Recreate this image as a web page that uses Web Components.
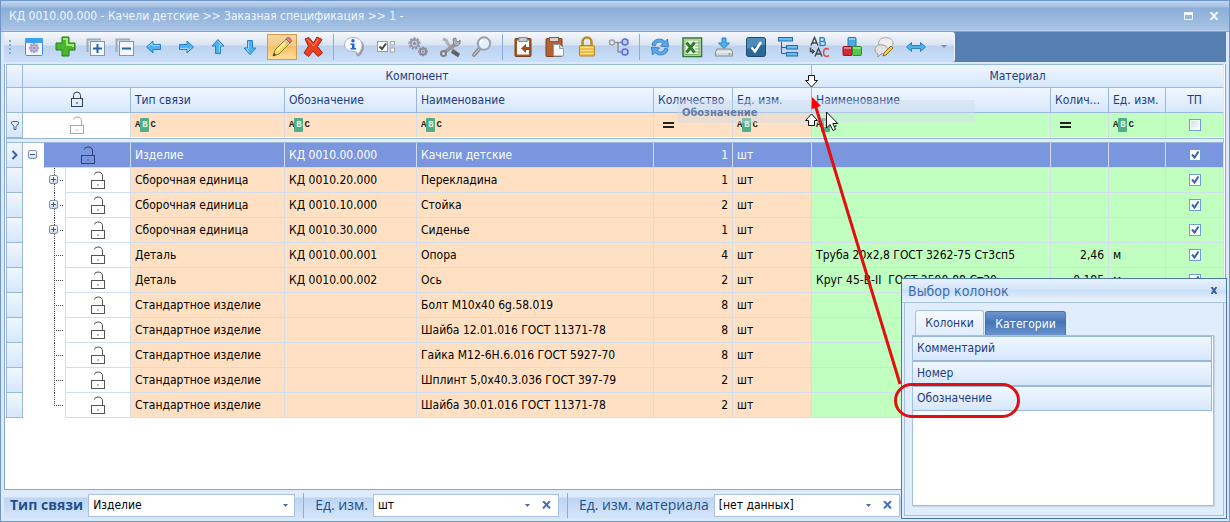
<!DOCTYPE html>
<html lang="ru">
<head>
<meta charset="utf-8">
<title>Заказная спецификация</title>
<style>
  html, body { margin: 0; height: 100%; }
  body {
    font: 12px/16px "DejaVu Sans Condensed", "Noto Sans", sans-serif;
    color: #000;
    background: #d9e8fa;
    overflow: hidden;
  }
</style>
</head>
<body>
<app-window caption="КД 0010.00.000 - Качели детские &gt;&gt; Заказная спецификация &gt;&gt; 1 -">
  <tool-bar slot="toolbar"></tool-bar>
  <spec-grid></spec-grid>
  <status-bar slot="status">
    <status-field label="Тип связи" value="Изделие" main></status-field>
    <status-field label="Ед. изм." value="шт" clearable></status-field>
    <status-field label="Ед. изм. материала" value="[нет данных]" clearable></status-field>
  </status-bar>
  <column-chooser slot="overlay" caption="Выбор колонок"></column-chooser>
  <drag-ghost slot="overlay">Обозначение</drag-ghost>
  <drag-marks slot="overlay"></drag-marks>
</app-window>

<script>
const define = (name, css, html) => {
  customElements.define(name, class extends HTMLElement {
    connectedCallback() {
      if (this.shadowRoot) return;
      const root = this.attachShadow({ mode: 'open' });
      const body = typeof html === 'function' ? html(this) : html;
      root.innerHTML = `<style>:host,*{box-sizing:border-box}${css}</style>${body}`;
    }
  });
};

const gear = (cx, cy, r, fill, teeth = 8) => {
  let s = '';
  for (let i = 0; i < teeth; i++) {
    s += `<rect x="${cx - 1.3}" y="${cy - r - 1.5}" width="2.6" height="3.4" fill="${fill}" transform="rotate(${i * 360 / teeth} ${cx} ${cy})"/>`;
  }
  return `${s}<circle cx="${cx}" cy="${cy}" r="${r}" fill="${fill}"/><circle cx="${cx}" cy="${cy}" r="${r * .62}" fill="#c9c9dc"/><circle cx="${cx}" cy="${cy}" r="${r * .35}" fill="#8c8ca6"/>`;
};
const arrowPath = 'M4.500 12l6.500-6v3.500h7.500v5H11V18z';
const arrow = deg => `<g transform="rotate(${deg} 12 12)"><path d="${arrowPath}" fill="#4fb2ef" stroke="#2a80c8" stroke-linejoin="round"/><path d="M6.500 11.500L10 8.200v2.300h7.500" fill="none" stroke="#9bdafa"/></g>`;

const ICONS = {
  view: `<rect x="3.500" y="3.500" width="17" height="17" rx="1" fill="#f4f7fd" stroke="#3f8fe0"/><rect x="3" y="3" width="18" height="5" rx="1" fill="#3da0f0"/>${gear(12, 13, 3.6, '#a8a0cc')}`,
  add: `<path d="M8 3h7v6h6v7h-6v6H8v-6H2V9h6z" transform="translate(1 -1)" fill="#48b82a" stroke="#267a18"/><path d="M10 4h4v6h6v2" fill="none" stroke="#a5ea78" stroke-width="2"/>`,
  expand: `<path d="M3.500 17V4.500H17" fill="none" stroke="#a0acba" stroke-width="2"/><rect x="6.500" y="6.500" width="14" height="14" fill="#f2f8fd" stroke="#8297ac"/><path d="M13.500 9v9M9 13.500h9" stroke="#2a64a0" stroke-width="2"/>`,
  collapse: `<g transform="translate(-3 0)"><path d="M4.500 17V4.500H18" fill="none" stroke="#a0acba" stroke-width="2"/><rect x="7.500" y="6.500" width="14" height="14" fill="#f2f8fd" stroke="#8297ac"/><path d="M10 13.500h9" stroke="#2a64a0" stroke-width="2"/></g>`,
  left: `<g transform="translate(-4 0)">${arrow(0)}</g>`,
  right: `<g transform="translate(-3 0)">${arrow(180)}</g>`,
  up: `<g transform="translate(-2 0)">${arrow(90)}</g>`,
  down: `<g transform="translate(-1 0)">${arrow(270)}</g>`,
  edit: `<path d="M3 21l2-6L16 4l4 4L9 19z" fill="#f8dc50" stroke="#907830"/><path d="M6.500 16L17 5.500" stroke="#fff4a0" stroke-width="2"/><path d="M16 4l1.500-1.500q3-.5 4 3.500L20 8z" fill="#e88080" stroke="#a85858"/><path d="M14.500 5.500l4 4" stroke="#b8c0c8" stroke-width="2"/><path d="M3 21l1-3 2 2z" fill="#333"/>`,
  remove: `<path d="M4 4l4-1.500 4.500 5.500L16 2l5 2.500-4.500 7L21.500 18 17 21.500l-5-5.500-4.500 5.500-4.500-3.500L7.500 11z" fill="#ee4020" stroke="#a82010" stroke-linejoin="round"/><path d="M6.500 4.500l6 6.500 4.500-6.500" fill="none" stroke="#ff9070"/>`,
  info: `<path d="M12 4c6 0 10 3 10 7.500 0 4-2 6-4 9l-3 1-1-3z" fill="#9b98a4"/><path d="M11 2.500c5.500 0 9 3 9 7.500s-2 6-4 9.500l-2-3C7 17 2.500 14.500 2.500 10S6 2.500 11 2.500z" fill="#f8f8fe" stroke="#b4b2c4"/><circle cx="11" cy="5.800" r="1.700" fill="#1d66d8"/><path d="M8.500 8.500h4V13h1.500v1.500H8.500V13H10v-3H8.500z" fill="#1d66d8"/>`,
  options: `<g transform="translate(2 0)"><rect x="1.500" y="6.500" width="10" height="10" fill="#fff" stroke="#9a9a9a"/><path d="M3.500 11.500l2.500 2.500L10 8.500" fill="none" stroke="#444" stroke-width="2"/><rect x="14.500" y="6.500" width="4" height="3.500" fill="#f5f5f5" stroke="#a8a8a8"/><rect x="14.500" y="13" width="4" height="4" fill="#f5f5f5" stroke="#a8a8a8"/></g>`,
  gears: gear(8.5, 8.500, 4.6, '#9a9aab', 9) + gear(17, 16.500, 3.2, '#8a8a9c'),
  tools: `<path d="M5 4l3 1 2 4 8 9" stroke="#b0b0b6" stroke-width="3" fill="none"/><path d="M19 8L7 17" stroke="#98989e" stroke-width="4"/><path d="M15 4l3-1v3l3 1 1-2c1 5-3 7-6 5z" fill="#b4b4ba" stroke="#808088"/><circle cx="5.500" cy="18.500" r="2.500" fill="none" stroke="#808088" stroke-width="2"/><path d="M14 16l7 4.500" stroke="#606068" stroke-width="4"/>`,
  search: `<path d="M9.500 13.500L4 20" stroke="#8e8e94" stroke-width="4" stroke-linecap="round"/><path d="M9.500 13.500L4 20" stroke="#d8d8dc" stroke-linecap="round"/><circle cx="14" cy="8.500" r="6.200" fill="#e4effb" stroke="#9aa0aa" stroke-width="2"/><path d="M10.500 8a3.500 3.500 0 013-3" fill="none" stroke="#fff" stroke-width="1.500"/>`,
  pasteIn: `<rect x="4" y="3.500" width="16" height="18" rx="1" fill="#a85828" stroke="#7c3e18"/><rect x="6" y="5.500" width="12" height="14" fill="#fbfbfb"/><rect x="8" y="2.500" width="8" height="4" fill="#c8ccd4" stroke="#888e98"/><path d="M10 13.500l5-4.500v3h4v3h-4v3z" fill="#a84818"/>`,
  paste: `<rect x="3" y="3.500" width="16" height="18" rx="1" fill="#b06434" stroke="#7c3e18"/><rect x="6.500" y="2.500" width="9" height="4" fill="#d4d4d8" stroke="#8a5a40"/><path d="M10.500 9.500h6l4 4v7.500h-10z" fill="#f4faff" stroke="#8aa0b8"/><path d="M16.500 9.500v4h4" fill="#cfe4f6" stroke="#8aa0b8"/>`,
  padlock: `<path d="M7.500 11V7a4.500 4.500 0 019 0v4" fill="none" stroke="#b88c20" stroke-width="2.500"/><rect x="4.500" y="10.500" width="15" height="10.500" rx="1" fill="#efbe48" stroke="#b4862a"/><path d="M5.500 12.500h13M5.500 15.500h13M5.500 18.500h13" stroke="#ffe394"/>`,
  nodes: `<path d="M7 7.500h8M11 7.500V17h4" fill="none" stroke="#8c8c94" stroke-width="1.500"/><circle cx="5" cy="7.500" r="2.500" fill="#eee" stroke="#a0a0a8" stroke-width="1.500"/><circle cx="18" cy="7" r="3" fill="#c4ccf8" stroke="#5870d8" stroke-width="1.500"/><circle cx="18" cy="17" r="3" fill="#c4ccf8" stroke="#5870d8" stroke-width="1.500"/>`,
  refresh: `<path d="M4 10c1-6 9-8 13-3.500L19.500 4l1 8-8-1 2.500-2.500C12 6 8 7 7.500 10.500z" fill="#58a8ec" stroke="#3c80c8"/><path d="M20 14c-1 6-9 8-13 3.500L4.500 20l-1-8 8 1L9 15.500c3 2.500 7 1.500 7.500-2z" fill="#58a8ec" stroke="#3c80c8"/>`,
  excel: `<rect x="3" y="3" width="18.500" height="18.500" fill="#dcebd0" stroke="#2e7a2c" stroke-width="1.500"/><rect x="5" y="5" width="14" height="14.500" fill="#f4faf0" stroke="#7fb070"/><path d="M14 8h5.500M15 11h4.500M15 14h4.500M14 17h5.500" stroke="#6aa860"/><path d="M6.500 7.500l8 10M14.500 7.500l-8 10" stroke="#2e7a2c" stroke-width="3"/>`,
  download: `<path d="M12 13.500L6.500 8H10V3h4v5h3.500z" fill="#4cb0ee" stroke="#2a80c8"/><path d="M5 14h14l1.500 3v4h-17v-4z" fill="#d4d8dc" stroke="#868c94"/><path d="M4 17h16" stroke="#f8f8f8"/><circle cx="17.500" cy="19" r="1" fill="#60b848"/>`,
  check: `<rect x="2.500" y="2.500" width="19" height="19" rx="2" fill="#2a6898" stroke="#1c4a74"/><path d="M3 4q0-1 1-1h16q1 0 1 1v6q-9 0-18 4z" fill="#4f8cba"/><path d="M7.500 12.500l3.500 4 6-9.500" fill="none" stroke="#fff" stroke-width="2.500"/>`,
  tree: `<path d="M5.500 7v11.500H12M5 12.500h7" fill="none" stroke="#555"/><g fill="#6cbcf0" stroke="#246aa8"><rect x="2.500" y="2.500" width="14" height="3.500"/><rect x="10.500" y="10.500" width="11" height="3.500"/><rect x="10.500" y="17.500" width="11" height="3.500"/></g>`,
  replace: `<g fill="none" stroke-width="1.400"><path d="M3 10.500L6.500 2.500l3.500 8M4.200 8h4.600" stroke="#444"/><path d="M12 2.800v7.700h3q2.500 0 2.500-2t-2.500-2h-3h2.500q2 0 2-1.800t-2-1.900z" stroke="#2f86d0"/><path d="M2.500 12.500v4h3M4 14.500l2 2-2 2" stroke="#444"/><path d="M7 21.500l3.500-8 3.500 8M8.200 19h4.600" stroke="#444"/><path d="M21 14.500q-1-1-2.500-1-3 .5-3 4t3 4q1.500 0 2.500-1" stroke="#e04848"/></g>`,
  cubes: `<rect x="8" y="2.500" width="8" height="9" rx="1" fill="#48a8e8" stroke="#2878b8"/><rect x="3" y="11.500" width="9" height="9" rx="1" fill="#d82838" stroke="#981420"/><rect x="12.500" y="11.500" width="9" height="9" rx="1" fill="#58c848" stroke="#2e8a28"/><path d="M9 4h6M4 13h7M13.500 13h7" stroke="#fff" stroke-opacity=".5" stroke-width="1.500"/>`,
  note: `<path d="M11 3c6-1 10 1 10 5s-3 5-5 5l-1 3-2-3c-8 0-8-9-2-10z" fill="#eeeef0" stroke="#a4a4a8"/><path d="M3 15c0-4 4-6 8-5s5 4 4 6-4 3-6 3l-3 3v-3c-2-1-3-2-3-4z" fill="#e2e2e6" stroke="#989898"/><path d="M11 21l1-3 7-7 2 2-7 7z" fill="#f6cc48" stroke="#8c7028"/>`,
  both: `<path d="M2.500 12l5-4.500v3h9v-3l5 4.500-5 4.500v-3h-9v3z" fill="#4fb2ef" stroke="#2a80c8" stroke-linejoin="round"/>`
};

const TOOLS = [
  [['view', 'Вид'], ['add', 'Добавить'], ['expand', 'Развернуть'], ['collapse', 'Свернуть'], ['left', 'Влево'], ['right', 'Вправо'], ['up', 'Вверх'], ['down', 'Вниз'], ['edit', 'Править'], ['remove', 'Удалить']],
  [['info', 'Сведения'], ['options', 'Параметры'], ['gears', 'Настройки'], ['tools', 'Сервис'], ['search', 'Поиск']],
  [['pasteIn', 'Вставить в'], ['paste', 'Вставить'], ['padlock', 'Блокировка'], ['nodes', 'Связи']],
  [['refresh', 'Обновить'], ['excel', 'Экспорт'], ['download', 'Загрузить'], ['check', 'Проверить'], ['tree', 'Дерево'], ['replace', 'Заменить'], ['cubes', 'Объекты'], ['note', 'Заметка'], ['both', 'По ширине']]
];

define('app-window', `
  :host { display: flex; flex-direction: column; position: relative; min-height: 100vh;
    border: 1px solid #7196c6; border-top: 0; background: #dbe9fb; padding: 0 3px 2px; }
  header { display: flex; align-items: center; height: 32px; margin: 0 -3px; padding: 0 9px 0 8px; flex: none;
    color: #eef5fd; border-bottom: 1px solid #7ea3d0;
    background: linear-gradient(#6f97ca 0 1px, #c3d8f0 1px, #a3c0e2 7px, #8badd8 8px, #a8c3e4 30px, #c4daf3 31px); }
  h1 { flex: 1; margin: 0; font: inherit; white-space: nowrap; overflow: hidden; }
  header button { border: 0; background: none; padding: 0; width: 12px; height: 12px; margin-left: 13px; display: grid; place-items: center; }
  main { flex: 1; display: flex; flex-direction: column; margin: 2px 0 1px 0; background: #fff; border: 1px solid #86a8d3; border-top: 0; min-height: 0; }
`, el => `
  <header><h1>${el.getAttribute('caption').replace(/>/g, '&gt;')}</h1>
    <button aria-label="Развернуть"><svg width="10" height="8"><path d="M.5 1v6.500h8V1" fill="none" stroke="#f2f7fd"/><rect width="9" height="3" fill="#f2f7fd"/></svg></button>
    <button aria-label="Закрыть"><svg width="10" height="8"><path d="M1.500 0L8.500 8M8.500 0L1.500 8" stroke="#f2f7fd" stroke-width="2"/></svg></button>
  </header>
  <slot name="toolbar"></slot><main><slot></slot></main><slot name="status"></slot><slot name="overlay"></slot>`);

define('tool-button', `
  :host { display: block; }
  button { display: grid; place-items: center; width: 30px; height: 26px; padding: 0; border: 1px solid transparent; background: none; }
  :host([active]) button { border-color: #d09a50; background: linear-gradient(#f6d8a4, #f9c880 45%, #fbbc68 50%, #fde09a); }
  svg { display: block; }
`, el => `<button aria-label="${el.getAttribute('label')}"><svg width="24" height="24" viewBox="0 0 24 24">${ICONS[el.getAttribute('icon')]}</svg></button>`);

define('tool-bar', `
  :host { display: flex; flex: none; height: 30px; background: #557eb3; }
  .band { display: flex; align-items: center; padding: 0 3px 0 5px; border-radius: 0 3px 3px 0;
    background: linear-gradient(#f6f9fd, #d9e3f0 13px, #bdd2ee 14px, #c9dffa); border-right: 1px solid #eef4fc; }
  .grip { width: 2px; height: 15px; margin-right: 8px; background: repeating-linear-gradient(#8aa5c9 0 2px, transparent 2px 4px); }
  .group { display: flex; gap: 2px; }
  .tight { gap: 1px; }
  .sep { width: 1px; height: 26px; margin: 0 5px; background: #8badd8; }
  .more { width: 14px; height: 26px; padding: 0; margin-left: 6px; border: 0; background: none; display: grid; place-items: center; }
`, () => `<div class="band"><span class="grip"></span>${TOOLS.map((g, i) =>
  `<div class="group${i ? '' : ' tight'}">${g.map(([icon, label]) =>
    `<tool-button icon="${icon}" label="${label}"${icon === 'edit' ? ' active' : ''}></tool-button>`).join('')}</div>`
).join('<span class="sep"></span>')}<button class="more" aria-label="Ещё"><svg width="6" height="4"><path d="M0 0h6L3 3z" fill="#6d8fc0"/></svg></button></div>`);

define('lock-icon', `
  :host { display: block; width: 14px; }
  svg { display: block; }
`, el => {
  const c = el.getAttribute('color') || '#555';
  return el.hasAttribute('closed')
    ? `<svg width="14" height="18" fill="none" stroke="${c}"><rect x="1.500" y="7.500" width="11" height="8"/><path d="M3.500 7V4.500a3.500 3.500 0 017 0V7"/><rect x="6.500" y="11.500" width="1" height="1" stroke-opacity=".5"/></svg>`
    : `<svg width="14" height="18" fill="none" stroke="${c}"><rect x=".5" y="9.500" width="13" height="8"/><path d="M3.500 3.500q0-2.500 3.500-2.500 4.500 0 4.500 4v4.500"/><rect x="6.500" y="13.500" width="1" height="1" stroke-opacity=".4"/></svg>`;
});

define('abc-mark', `
  :host { display: flex; align-items: center; font: bold 9px/14px "Liberation Mono", monospace; color: #222; }
  b { width: 9px; height: 14px; margin-right: 1px; color: #e4f8e8; background: #4fae88; border-radius: 1px; text-align: center; }
`, `A<b>B</b>C`);

define('check-box', `
  :host { display: block; width: 12px; }
  input { appearance: none; display: block; width: 12px; height: 12px; margin: 0; border: 1px solid #6f9fd4;
    background: linear-gradient(135deg, #cfdcec, #fff); box-shadow: inset 0 0 0 1px #fff; }
  input:checked { background: url('data:image/svg+xml,<svg xmlns="http://www.w3.org/2000/svg" width="10" height="10"><path d="M2 4.500l2.500 3L8.500 1.500" fill="none" stroke="%233563ac" stroke-width="2"/></svg>') #fff; }
`, el => `<input type="checkbox" aria-label="ТП"${el.hasAttribute('checked') ? ' checked' : ''}>`);

define('tree-node', `
  :host { display: flex; height: 100%; }
  .indent { position: relative; flex: none; width: 21px; }
  :host([level="1"]) .indent { width: 42px; }
  .line { position: absolute; top: 0; left: 31px; width: 1px; height: 100%; background: repeating-linear-gradient(#444 0 1px, transparent 1px 2px); }
  :host([last]) .line { height: 13px; }
  .tick { position: absolute; top: 12px; left: 31px; right: 2px; height: 1px; background: repeating-linear-gradient(90deg, #444 0 1px, transparent 1px 2px); }
  :host([level="0"]) .tick { left: 16px; }
  button { position: absolute; left: 26px; top: 7px; width: 9px; height: 9px; padding: 0; border: 1px solid #7c8fae; border-radius: 2px;
    background: linear-gradient(#fff, #cfd9ec); }
  button::before { content: ""; position: absolute; left: 1px; right: 1px; top: 3px; height: 1px; background: #3b5a94; }
  button.plus::after { content: ""; position: absolute; top: 1px; bottom: 1px; left: 3px; width: 1px; background: #3b5a94; }
  :host([level="0"]) button { left: 5px; }
  :host([kids]) .tick::before { content: ""; position: absolute; width: 5px; height: 1px; background: #fff; }
  .cell { flex: 1; display: grid; place-items: center; border-bottom: 1px solid #d3deec; border-left: 1px solid #d3deec; }
  :host([level="0"]) .cell { background: #7a96de; border-left-color: #7a96de; }
`, el => {
  const root = el.getAttribute('level') === '0';
  const kids = el.hasAttribute('kids');
  return `<div class="indent">${root ? '' : '<span class="line"></span>'}<span class="tick"></span>${kids ? `<button class="${root ? '' : 'plus'}" aria-label="Узел"></button>` : ''}</div>
    <div class="cell"><lock-icon color="${root ? '#2f3f70' : '#555'}"></lock-icon></div>`;
});

const ROWS = [
  ['Изделие', 'КД 0010.00.000', 'Качели детские', '1', '', '', '', 1],
  ['Сборочная единица', 'КД 0010.20.000', 'Перекладина', '1', '', '', '', 1],
  ['Сборочная единица', 'КД 0010.10.000', 'Стойка', '2', '', '', '', 1],
  ['Сборочная единица', 'КД 0010.30.000', 'Сиденье', '1', '', '', '', 1],
  ['Деталь', 'КД 0010.00.001', 'Опора', '4', 'Труба 20х2,8 ГОСТ 3262-75 Ст3сп5', '2,46', 'м', 0],
  ['Деталь', 'КД 0010.00.002', 'Ось', '2', 'Круг 45-В-II  ГОСТ 2590-88 Ст20', '0,185', 'м', 0],
  ['Стандартное изделие', '', 'Болт М10х40 6g.58.019', '8', '', '', '', 0],
  ['Стандартное изделие', '', 'Шайба 12.01.016 ГОСТ 11371-78', '8', '', '', '', 0],
  ['Стандартное изделие', '', 'Гайка М12-6Н.6.016 ГОСТ 5927-70', '8', '', '', '', 0],
  ['Стандартное изделие', '', 'Шплинт 5,0х40.3.036 ГОСТ 397-79', '2', '', '', '', 0],
  ['Стандартное изделие', '', 'Шайба 30.01.016 ГОСТ 11371-78', '2', '', '', '', 0]
];

define('spec-grid', `
  :host { display: block; flex: 1; padding: 0 1px; overflow: hidden; }
  table { width: 100%; table-layout: fixed; border-collapse: separate; border-spacing: 0; }
  th, td { height: 25px; padding: 0 4px; font-weight: normal; text-align: left; white-space: pre; overflow: hidden; }
  th { color: #1e3c80; background: linear-gradient(#f0f7ff, #d6e7fb); border: 1px solid #9ab7dc; border-width: 0 1px 1px 0; text-overflow: ellipsis; }
  th:last-child { border-right-color: #dbe9fb; }
  th:first-child { border-left-width: 1px; padding: 0; }
  thead tr:first-child th { height: 24px; border-top-width: 1px; text-align: center; }
  .mid { text-align: center; }
  .num { text-align: right; }
  td { background: #ffe0c2; border: 1px solid #d3deec; border-width: 0 1px 1px 0; }
  td.m { background: #c1ffc1; }
  .filter td { border-bottom-color: #fff; }
  td.white, td.node { background: #fff; }
  td.node { padding: 0; border-bottom: 0; }
  td.gap { height: 5px; padding: 0; background: #e2eefc; border: 1px solid #9ab7dc; }
  tbody tr:first-child td:not(.node) { background: #7a96de; color: #fff; }
  svg, lock-icon, check-box { display: block; margin: 0 auto; }
  .eq { margin: 0 5px; }
`, () => {
  const f = (m = '') => `<td class="${m}"><abc-mark></abc-mark></td>`;
  const eq = m => `<td class="${m}"><svg class="eq" width="11" height="6"><path d="M0 1h11M0 5h11" stroke="#222" stroke-width="2"/></svg></td>`;
  return `<table>
  <colgroup>${[17, 108, 154, 132, 237, 79, 79, 239, 58, 57, 58].map(w => `<col style="width:${w}px">`).join('')}</colgroup>
  <thead>
    <tr><th></th><th colspan="6">Компонент</th><th colspan="4">Материал</th></tr>
    <tr><th></th><th><lock-icon closed color="#33405c"></lock-icon></th><th>Тип связи</th><th>Обозначение</th><th>Наименование</th><th>Количество</th><th>Ед. изм.</th><th>Наименование</th><th>Колич...</th><th>Ед. изм.</th><th class="mid">ТП</th></tr>
    <tr class="filter"><th><svg width="8" height="9" fill="none" stroke="#3f6096"><path d="M.5 1q0-.5 3.500-.5T7.500 1v1.500L5 5.500v3H3v-3L.5 2.500z"/></svg></th>
      <td class="white"><lock-icon color="#a8a8a8"></lock-icon></td>${f()}${f()}${f()}${eq('')}${f()}${f('m')}${eq('m')}${f('m')}<td class="m"><check-box></check-box></td></tr>
    <tr><td class="gap" colspan="11"></td></tr>
  </thead>
  <tbody>${ROWS.map(([type, code, name, qty, mat, mq, mu, kids], i) => `<tr>
    <th>${i ? '' : '<svg width="8" height="10"><path d="M1.500 1l4 4-4 4" fill="none" stroke="#3a62a4" stroke-width="2"/></svg>'}</th>
    <td class="node"><tree-node level="${i ? 1 : 0}"${kids ? ' kids' : ''}${i === ROWS.length - 1 ? ' last' : ''}></tree-node></td>
    <td>${type}</td><td>${code}</td><td>${name}</td><td class="num">${qty}</td><td>шт</td>
    <td class="m">${mat}</td><td class="m num">${mq}</td><td class="m">${mu}</td><td class="m"><check-box checked></check-box></td></tr>`).join('')}
  </tbody></table>`;
});

define('status-bar', `
  :host { display: flex; flex: none; align-items: center; height: 28px; padding: 0 6px;
    background: linear-gradient(#dfebfb 0 6px, #bcd4f3 7px, #d6e6fa); }
  ::slotted(:not(:last-child)) { padding-right: 8px; margin-right: 11px; border-right: 1px solid #8badd8; }
`, `<slot></slot>`);

define('status-field', `
  :host { display: flex; align-items: center; height: 25px; color: #24508c; }
  label { margin-right: 5px; font: 14px/20px "Open Sans", sans-serif; white-space: nowrap; }
  :host([main]) label { font-weight: bold; }
  .box { display: flex; align-items: center; width: 186px; height: 23px; background: #fff; border: 1px solid #a9c2e2; }
  :host([main]) .box { width: 207px; }
  select { flex: 1; min-width: 0; height: 21px; appearance: none; border: 0; padding: 0 20px 0 4px; font: inherit; color: #000; outline: 0;
    background: url('data:image/svg+xml,<svg xmlns="http://www.w3.org/2000/svg" width="5" height="3"><path d="M0 0h5L2.500 3z" fill="%233f6dae"/></svg>') no-repeat right 6px center; }
  button { width: 22px; height: 21px; padding: 0; border: 0; background: none; display: grid; place-items: center; }
`, el => `<label for="f">${el.getAttribute('label')}</label><div class="box"><select id="f"><option>${el.getAttribute('value')}</option></select>${
  el.hasAttribute('clearable') ? '<button aria-label="Очистить"><svg width="9" height="8"><path d="M1 0l7 7.500M8 0L1 7.500" stroke="#4672b0" stroke-width="2"/></svg></button>' : ''}</div>`);

define('column-chooser', `
  :host { position: absolute; right: 2px; bottom: 2px; width: 326px; height: 241px; display: flex; flex-direction: column;
    border: 1px solid #4877ae; background: #e0edfd; color: #1e3c80; padding: 0 2px 2px; }
  header { display: flex; align-items: center; justify-content: space-between; height: 24px; margin: 0 -2px; padding: 0 8px 0 6px; flex: none;
    background: linear-gradient(#e8f2fd, #d3e4f8 45%, #c9def6 50%, #eaf3fe); border-bottom: 1px solid #a4c0e4; }
  h2 { margin: 0; font: 14px/20px "DejaVu Sans Condensed", "Noto Sans", sans-serif; color: #3e6cae; }
  header button { border: 0; background: none; padding: 0; width: 8px; height: 8px; }
  svg { display: block; }
  section { flex: 1; display: flex; flex-direction: column; padding: 7px 9px 9px 7px; border: 1px solid #a4c0e4; border-top: 0; }
  nav { display: flex; align-items: flex-end; gap: 1px; padding: 0 3px; height: 25px; }
  nav button { height: 24px; width: 81px; padding: 0; font: inherit; color: #fff; border: 1px solid #4672b0; border-bottom: 0; border-radius: 3px 3px 0 0;
    background: linear-gradient(#6f95cf, #4774b8 45%, #6b93cc); }
  nav button.on { height: 25px; width: 69px; color: #1e3c80; border-color: #a4c0e4; background: linear-gradient(#f8fbff, #e0edfd); }
  ul { flex: 1; margin: 0; padding: 0 1px 0 0; list-style: none; background: #fff; border: 1px solid #a4c0e4; box-shadow: 1px 1px 1px #c4d6ee; }
  li { height: 25px; padding: 3px 4px; border: 1px solid #9ab7dc; border-width: 1px 1px 1px 0; background: linear-gradient(#f0f7ff, #d6e7fb); }
`, el => `<header><h2>${el.getAttribute('caption')}</h2><button aria-label="Закрыть"><svg width="8" height="7"><path d="M1.500 0l5 7M6.500 0l-5 7" stroke="#3a5f98" stroke-width="2"/></svg></button></header>
  <section><nav><button class="on">Колонки</button><button>Категории</button></nav>
  <ul><li>Комментарий</li><li>Номер</li><li>Обозначение</li></ul></section>`);

define('drag-ghost', `
  :host { position: absolute; left: 676px; top: 100px; width: 298px; height: 23px; padding: 4px 5px; font-weight: bold; font-size: 11px; line-height: 17px; color: #4a6492;
    background: rgba(206, 219, 236, .5); opacity: .8; }
`, `<slot></slot>`);

define('drag-marks', `
  :host { position: absolute; inset: 0; pointer-events: none; overflow: hidden; }
  svg { display: block; margin-left: -1px; }
`, `<svg width="1230" height="522">
  <g fill="#fff" stroke="#111">
    <path d="M808.500 75.500h6v5h3l-6 6.500-6-6.500h3z"/>
    <path d="M808.500 125.500h6v-5h3l-6-6.500-6 6.500h3z"/>
    <path d="M826.500 112v16l3.500-3.500 3 6 2.500-1.200-2.700-5.800h5z"/>
  </g>
  <path d="M900 384L815.500 106" stroke="#e30e0e" stroke-width="3"/>
  <path d="M812 97l-.5 12 9.500-3z" fill="#f00"/>
  <rect x="895.500" y="384.500" width="123" height="32" rx="16" fill="none" stroke="#e01010" stroke-width="3"/>
</svg>`);
</script>
</body>
</html>
